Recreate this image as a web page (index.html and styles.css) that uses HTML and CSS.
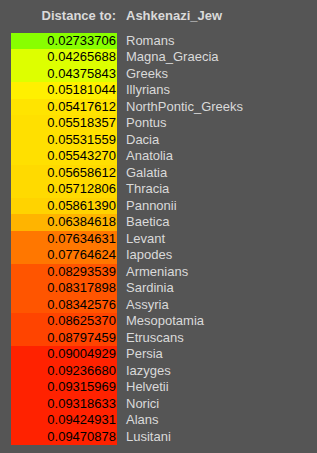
FILE: index.html
```html
<!DOCTYPE html>
<html>
<head>
<meta charset="utf-8">
<link rel="stylesheet" href="styles.css">
</head>
<body>
<div class="panel">
  <div class="head">
    <div class="head-label">Distance to:</div>
    <div class="head-target">Ashkenazi_Jew</div>
  </div>
  <div class="rows">
    <div class="val c1">0.02733706</div><div class="name">Romans</div>
    <div class="val c2">0.04265688</div><div class="name">Magna_Graecia</div>
    <div class="val c2">0.04375843</div><div class="name">Greeks</div>
    <div class="val c3">0.05181044</div><div class="name">Illyrians</div>
    <div class="val c4a">0.05417612</div><div class="name">NorthPontic_Greeks</div>
    <div class="val c4b">0.05518357</div><div class="name">Pontus</div>
    <div class="val c4b">0.05531559</div><div class="name">Dacia</div>
    <div class="val c4b">0.05543270</div><div class="name">Anatolia</div>
    <div class="val c4c">0.05658612</div><div class="name">Galatia</div>
    <div class="val c4c">0.05712806</div><div class="name">Thracia</div>
    <div class="val c5">0.05861390</div><div class="name">Pannonii</div>
    <div class="val c6">0.06384618</div><div class="name">Baetica</div>
    <div class="val c7">0.07634631</div><div class="name">Levant</div>
    <div class="val c7">0.07764624</div><div class="name">Iapodes</div>
    <div class="val c8">0.08293539</div><div class="name">Armenians</div>
    <div class="val c8">0.08317898</div><div class="name">Sardinia</div>
    <div class="val c8">0.08342576</div><div class="name">Assyria</div>
    <div class="val c9">0.08625370</div><div class="name">Mesopotamia</div>
    <div class="val c9">0.08797459</div><div class="name">Etruscans</div>
    <div class="val c10">0.09004929</div><div class="name">Persia</div>
    <div class="val c10">0.09236680</div><div class="name">Iazyges</div>
    <div class="val c10">0.09315969</div><div class="name">Helvetii</div>
    <div class="val c10">0.09318633</div><div class="name">Norici</div>
    <div class="val c10">0.09424931</div><div class="name">Alans</div>
    <div class="val c10">0.09470878</div><div class="name">Lusitani</div>
  </div>
</div>
</body>
</html>
```

FILE: styles.css
```css
html, body {
  margin: 0;
  background: #555555;
}
body {
  font-family: "Liberation Sans", Arial, sans-serif;
  font-size: 13px;
  line-height: 16.5px;
}
.panel {
  padding: 8px 0 0 11px;
}
.head {
  display: grid;
  grid-template-columns: 105px auto;
  height: 16.5px;
  margin-bottom: 8px;
  font-weight: bold;
  color: #dadada;
}
.head-label {
  text-align: right;
}
.head-target {
  padding-left: 10px;
}
.rows {
  display: grid;
  grid-template-columns: 106px auto;
  grid-auto-rows: 16.5px;
}
.val {
  text-align: right;
  padding-right: 1px;
  color: #000;
}
.name {
  padding-left: 9px;
  color: #dadada;
}
.c1 { background: #88ff00; }
.c2 { background: #ddff00; }
.c3 { background: #fff000; }
.c4a { background: #ffe400; }
.c4b { background: #ffe000; }
.c4c { background: #ffda00; }
.c5 { background: #ffd300; }
.c6 { background: #ffb400; }
.c7 { background: #ff7700; }
.c8 { background: #ff5500; }
.c9 { background: #ff4400; }
.c10 { background: #ff2200; }
```
